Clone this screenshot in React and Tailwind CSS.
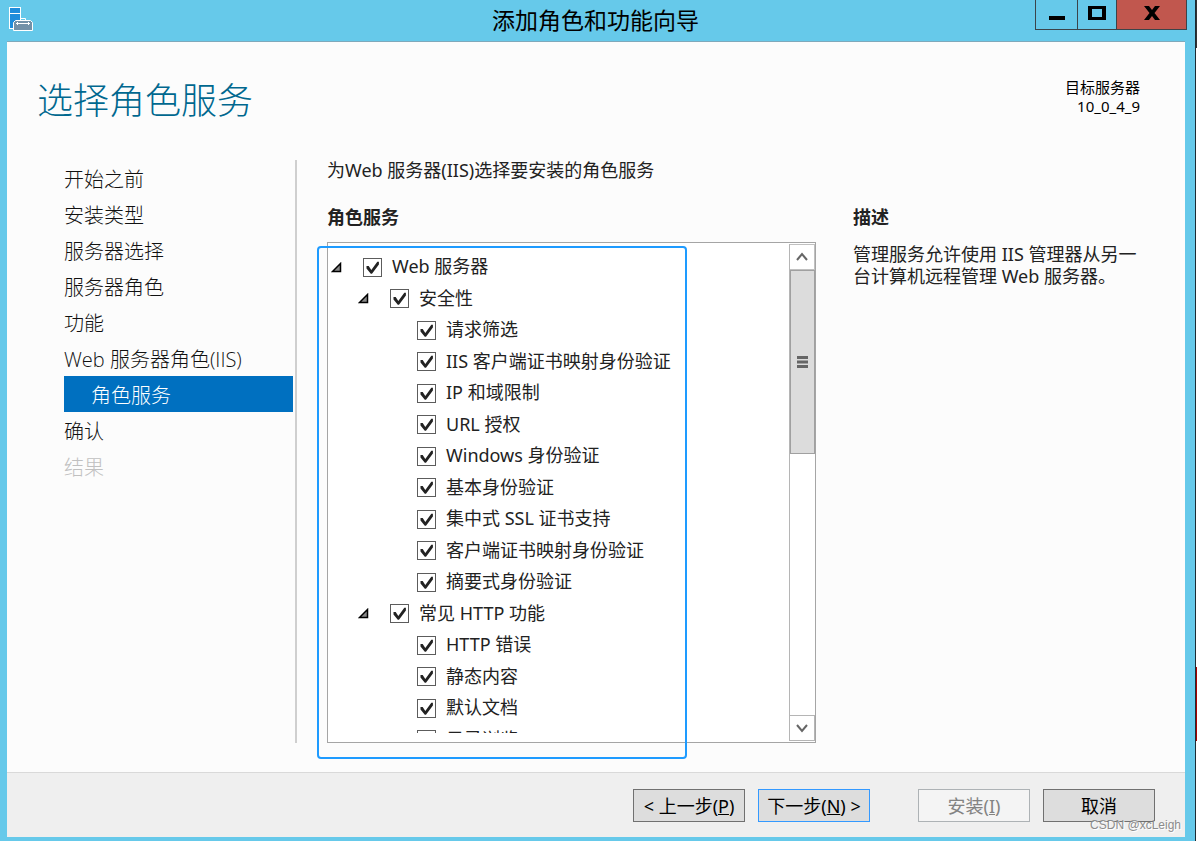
import React, { useState } from "react";
import clsx from "clsx";

const steps = [
  { id: "before", label: "开始之前" },
  { id: "type", label: "安装类型" },
  { id: "server", label: "服务器选择" },
  { id: "roles", label: "服务器角色" },
  { id: "features", label: "功能" },
  { id: "iis", label: "Web 服务器角色(IIS)" },
  { id: "services", label: "角色服务", child: true },
  { id: "confirm", label: "确认" },
  { id: "result", label: "结果", disabled: true },
];

const services = [
  { id: "web", label: "Web 服务器", level: 0, parent: true },
  { id: "security", label: "安全性", level: 1, parent: true },
  { id: "filter", label: "请求筛选", level: 2 },
  { id: "iis-cert", label: "IIS 客户端证书映射身份验证", level: 2 },
  { id: "ip", label: "IP 和域限制", level: 2 },
  { id: "url", label: "URL 授权", level: 2 },
  { id: "windows", label: "Windows 身份验证", level: 2 },
  { id: "basic", label: "基本身份验证", level: 2 },
  { id: "ssl", label: "集中式 SSL 证书支持", level: 2 },
  { id: "client-cert", label: "客户端证书映射身份验证", level: 2 },
  { id: "digest", label: "摘要式身份验证", level: 2 },
  { id: "http", label: "常见 HTTP 功能", level: 1, parent: true },
  { id: "errors", label: "HTTP 错误", level: 2 },
  { id: "static", label: "静态内容", level: 2 },
  { id: "default-doc", label: "默认文档", level: 2 },
  { id: "browse", label: "目录浏览", level: 2 },
];

const indent = ["pl-[3px]", "pl-[30px]", "pl-[57px]"];

const ServerIcon = () => (
  <svg width="26" height="26" viewBox="0 0 26 26" aria-hidden="true">
    <rect x="1.5" y="1.5" width="11" height="21" fill="#1f8ddb" stroke="#fff" />
    <path d="M2 7.5h10" stroke="#fff" />
    <path d="M12.500 14v-1.500h5V14" fill="none" stroke="#fff" />
    <path d="M7.500 14.500h15l2 2v8h-19v-8z" fill="#7391a8" stroke="#fff" />
    <path d="M8 17.500h14M9.500 16v3M20.500 16v3" stroke="#fff" />
  </svg>
);

const TitleBar = () => (
  <header className="flex h-[41px] shrink-0 items-start pl-2 pr-2">
    <div className="w-[148px] pt-[6px]">
      <ServerIcon />
    </div>
    <h1 className="flex-1 text-center text-[23px] leading-10 text-black">添加角色和功能向导</h1>
    <div className="flex h-[30px] w-[152px] border border-t-0 border-[#3b444a]">
      <button aria-label="最小化" className="flex w-[41px] items-center justify-center">
        <svg width="16" height="14" viewBox="0 0 16 14">
          <path d="M0 8h16v4H0z" />
        </svg>
      </button>
      <button aria-label="最大化" className="flex w-10 items-center justify-center border-x border-[#3b444a]">
        <svg width="18" height="14" viewBox="0 0 18 14" className="mb-1 shrink-0">
          <path d="M2 1.500h14v11H2z" fill="none" stroke="#000" strokeWidth="3" />
          <path d="M0 0h4v14H0zM14 0h4v14h-4z" />
        </svg>
      </button>
      <button aria-label="关闭" className="flex flex-1 items-center justify-center bg-[#c1574e]">
        <svg width="16" height="14" viewBox="0 0 16 14" className="mb-1">
          <path d="M0 0h5l3 4 3-4h5l-5.500 7 5.500 7h-5l-3-4-3 4H0l5.500-7z" />
        </svg>
      </button>
    </div>
  </header>
);

const StepNav = () => (
  <nav className="w-[233px] shrink-0 border-r-2 border-[#cfcfcf] pr-[2px] font-['Open_Sans','Noto_Sans_CJK_SC',sans-serif] text-xl font-light">
    {steps.map((step) => (
      <a
        key={step.id}
        href={`#${step.id}`}
        aria-disabled={step.disabled}
        className={clsx(
          "block h-9 leading-10",
          step.child && "bg-[#0070c0] pl-[27px] text-white",
          step.disabled && "text-[#c0c0c0]",
          !step.child && !step.disabled && "text-[#111]"
        )}
      >
        {step.label}
      </a>
    ))}
  </nav>
);

const ServiceRow = ({ item, checked, onChange }) => (
  <li className={clsx("flex items-center odd:h-8 even:h-[31px]", indent[item.level])}>
    <span className="w-8 shrink-0">
      {item.parent && (
        <svg width="11" height="11" viewBox="0 0 11 11">
          <path d="M9.500 1.500v8h-8z" fill="#888" stroke="#000" strokeWidth="1.500" />
        </svg>
      )}
    </span>
    <label className="flex items-center gap-[10px] whitespace-nowrap">
      <span className="relative flex">
        <input
          type="checkbox"
          checked={checked}
          onChange={onChange}
          className="h-[19px] w-[19px] appearance-none border border-[#5c5c5c] bg-white"
        />
        {checked && (
          <svg viewBox="0 0 19 19" className="pointer-events-none absolute inset-0 h-[19px] w-[19px]">
            <path d="M3.500 8h2.200l2.600 4L14.300 3.700h1.600v2.800L9 15.800H7.800L3.500 10.500z" fill="#222" />
          </svg>
        )}
      </span>
      <span className="pb-[2px]">{item.label}</span>
    </label>
  </li>
);

const ScrollBar = () => (
  <div className="flex w-[26px] shrink-0 flex-col border-l border-[#b5b5b5] bg-white">
    <button aria-label="向上滚动" className="flex h-[26px] items-center justify-center border border-l-0 border-[#c0c0c0]">
      <svg width="12" height="10" viewBox="0 0 12 10">
        <path d="M1 8l5-6 5 6" fill="none" stroke="#666" strokeWidth="2" />
      </svg>
    </button>
    <div className="flex-1">
      <div className="flex h-[184px] flex-col items-center justify-center border border-[#a0a0a0] bg-[#dcdcdc]">
        <svg width="11" height="12" viewBox="0 0 11 12">
          <path d="M0 1.500h11M0 6h11M0 10.500h11" stroke="#666" strokeWidth="3" />
        </svg>
      </div>
    </div>
    <button aria-label="向下滚动" className="flex h-[26px] items-center justify-center border border-l-0 border-[#b5b5b5]">
      <svg width="12" height="10" viewBox="0 0 12 10">
        <path d="M1 2l5 6 5-6" fill="none" stroke="#666" strokeWidth="2" />
      </svg>
    </button>
  </div>
);

const ServiceTree = () => {
  const [unchecked, setUnchecked] = useState(["browse"]);

  const toggle = (id) => {
    setUnchecked((prev) => (prev.includes(id) ? prev.filter((x) => x !== id) : [...prev, id]));
  };

  return (
    <div className="relative flex min-h-0 flex-1 border border-[#a5a5a5] bg-white pt-px pb-px">
      <div className="mt-[7px] mb-2 min-w-0 flex-1 overflow-hidden">
        <ul>
          {services.map((item) => (
            <ServiceRow
              key={item.id}
              item={item}
              checked={!unchecked.includes(item.id)}
              onChange={() => toggle(item.id)}
            />
          ))}
        </ul>
      </div>
      <ScrollBar />
      {/* Highlight frame */}
      <div className="pointer-events-none absolute top-[3px] -bottom-[17px] -left-[11px] w-[370px] rounded border-2 border-[#1e9bff]" />
    </div>
  );
};

const buttonStyle = "h-[33px] w-28 border text-lg leading-8 whitespace-nowrap";

const Footer = () => (
  <footer className="relative flex h-[65px] shrink-0 items-center justify-end gap-[13px] border-t border-[#d9d9d9] bg-[#efefef] pr-[30px]">
    <button className={clsx(buttonStyle, "border-[#707070] bg-[#dddddd] text-black")}>
      &lt; 上一步(<u>P</u>)
    </button>
    <button className={clsx(buttonStyle, "border-[#3399ff] bg-[#dddddd] text-black")}>
      下一步(<u>N</u>) &gt;
    </button>
    <button disabled className={clsx(buttonStyle, "ml-[35px] border-[#adb2b5] bg-[#f4f4f4] text-[#838383]")}>
      安装(<u>I</u>)
    </button>
    <button className={clsx(buttonStyle, "border-[#707070] bg-[#dddddd] text-black")}>取消</button>
    <span className="absolute right-1 bottom-1 font-['Liberation_Sans',sans-serif] text-xs text-[#8c8c8c] [text-shadow:1px_1px_0_#fff]">
      CSDN @xcLeigh
    </span>
  </footer>
);

const App = () => (
  <div className="flex h-screen min-h-[600px] overflow-hidden font-['Noto_Sans','Noto_Sans_CJK_SC',sans-serif] text-[#222]">
    <div className="flex min-w-0 flex-1 flex-col border-r border-[#1c2b33] bg-[#66c9ea]">
      <TitleBar />
      <div className="mr-[10px] mb-1 ml-[7px] flex min-h-0 flex-1 flex-col border-t border-[#7fa9bb] bg-[#fcfcfc]">
        <div className="flex shrink-0 items-start justify-between pt-8 pr-[45px] pl-[30px]">
          <h2 className="text-4xl leading-[54px] font-light text-[#00688f]">选择角色服务</h2>
          <div className="pt-1 text-right text-[15px] leading-[19px] text-black">
            <p>目标服务器</p>
            <p>10_0_4_9</p>
          </div>
        </div>

        <main className="mt-8 mb-[29px] flex min-h-0 flex-1 pr-[45px] pl-[57px]">
          <StepNav />
          <section className="ml-[30px] flex min-h-0 flex-[489] flex-col text-lg">
            <p className="leading-5 whitespace-nowrap">为Web 服务器(IIS)选择要安装的角色服务</p>
            <h3 className="mt-[26px] mb-[14px] leading-[22px] font-bold">角色服务</h3>
            <ServiceTree />
          </section>
          <aside className="ml-[37px] flex-[287] text-lg leading-[22px]">
            <h3 className="mt-[46px] mb-[15px] font-bold">描述</h3>
            <p>管理服务允许使用 IIS 管理器从另一台计算机远程管理 Web 服务器。</p>
          </aside>
        </main>

        <Footer />
      </div>
    </div>
    {/* Sliver of the desktop behind the window */}
    <div className="flex w-px shrink-0 flex-col bg-white">
      <div className="h-12 bg-[#333]" />
      <div className="flex-1" />
      <div className="h-[74px] bg-[#a80000]" />
      <div className="h-[100px]" />
    </div>
  </div>
);

export default App;
